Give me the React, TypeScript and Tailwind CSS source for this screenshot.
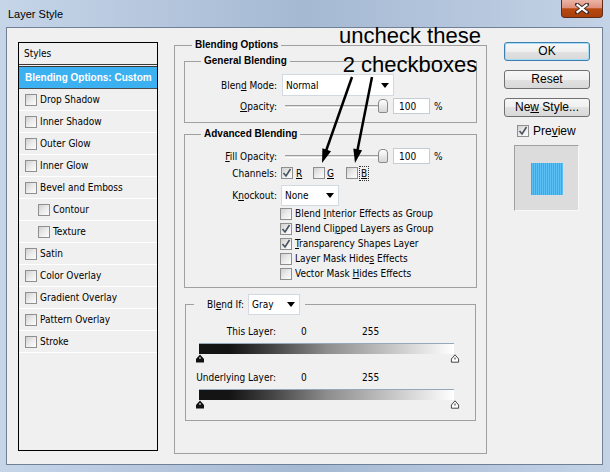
import React from 'react';

function Check({ checked = false }: { checked?: boolean }) {
  return (
    <span className="flex h-[12px] w-[12px] shrink-0 items-center justify-center border border-[#8f8f8f] bg-linear-to-br from-[#d0d0d0] via-[#ebebeb] to-[#fdfdfd]">
      {checked && (
        <svg width="10" height="10" viewBox="0 0 10 10">
          <path d="M1.5 5 L4 8 L8.5 1" fill="none" stroke="#46525f" strokeWidth="1.6" />
        </svg>
      )}
    </span>
  );
}

function Select({ value, className }: { value: string; className: string }) {
  return (
    <div className={`flex items-center justify-between border border-[#d3d9e0] bg-white pl-[3px] pr-[4px] ${className}`}>
      <span>{value}</span>
      <svg width="8" height="5" viewBox="0 0 8 5">
        <path d="M0 0H8L4 5Z" fill="#000" />
      </svg>
    </div>
  );
}

function Slider() {
  return (
    <div className="relative flex h-[16px] w-[112px] items-center">
      <div className="ml-[4px] h-[3px] w-[97px] border-t border-b border-t-[#9c9c9c] border-b-white bg-[#dedede]" />
      <div className="absolute left-[97px] top-[1px] h-[14px] w-[10px] rounded-t-[4px] rounded-b-[2px] border border-[#8a8a8a] bg-linear-to-b from-white to-[#d6d6d6]" />
    </div>
  );
}

function Num() {
  return (
    <>
      <div className="flex h-[16px] w-[37px] items-center border border-[#c6ccd4] bg-white pl-[5px]">100</div>
      <span className="ml-[4px]">%</span>
    </>
  );
}

function Label({ children }: { children: React.ReactNode }) {
  return <div className="w-[96px] shrink-0 pr-[4px] text-right">{children}</div>;
}

function Tri({ dark }: { dark?: boolean }) {
  return (
    <svg width="10" height="9" viewBox="0 0 10 9">
      {dark ? (
        <>
          <path d="M5 0.5 L9 5 L9 8.5 L1 8.5 L1 5 Z" fill="#111" />
          <rect x="4.5" y="3" width="1" height="2" fill="#fff" />
        </>
      ) : (
        <>
          <path d="M5 0.8 L8.6 5 L8.6 8.2 L1.4 8.2 L1.4 5 Z" fill="#fff" stroke="#333" strokeWidth="0.9" />
          <rect x="4.5" y="3.5" width="1" height="2" fill="#333" />
        </>
      )}
    </svg>
  );
}

function Bar() {
  return (
    <div className="ml-[13px] mt-[5px] h-[11px] w-[255px] border-t border-[#96a7ba] bg-linear-to-r from-[#141414] from-[12%] via-[#8d8d8d] via-[50%] to-white" />
  );
}

function Button({ children, focused, className = '' }: { children: React.ReactNode; focused?: boolean; className?: string }) {
  return (
    <div
      className={`flex h-[19px] w-[86px] items-center justify-center rounded-[3px] border bg-[linear-gradient(#f7f7f7,#efefef_50%,#e2e2e2_50%,#d8d8d8)] ${
        focused ? 'border-[#3c7fb1] shadow-[inset_0_0_0_1px_#a6dcf6]' : 'border-[#707070]'
      } ${className}`}
    >
      <span>{children}</span>
    </div>
  );
}

const styles: { t: React.ReactNode; indent?: boolean }[] = [
  { t: 'Drop Shadow' },
  { t: 'Inner Shadow' },
  { t: 'Outer Glow' },
  { t: 'Inner Glow' },
  { t: 'Bevel and Emboss' },
  { t: 'Contour', indent: true },
  { t: 'Texture', indent: true },
  { t: 'Satin' },
  { t: 'Color Overlay' },
  { t: 'Gradient Overlay' },
  { t: 'Pattern Overlay' },
  { t: 'Stroke' },
];

export default function App() {
  return (
    <div className="relative flex h-[472px] w-[610px] flex-col bg-linear-to-r from-[#c6d5e8] via-[#a5b9d3] to-[#c4d3e6] text-[10px] leading-[13px] text-black [font-family:'DejaVu_Sans_Condensed','Liberation_Sans',sans-serif]">
      {/* title bar */}
      <div className="flex h-[27px] shrink-0 items-start justify-between">
        <span className="ml-[8px] mt-[7px] text-[11px] leading-[14px] [font-family:'Liberation_Sans',sans-serif]">Layer Style</span>
        <div className="mr-[7px] flex h-[18px] w-[42px] items-center justify-center rounded-b-[4px] border border-t-0 border-[#5e2a1a] bg-[linear-gradient(#ecb4a6,#df917e_45%,#b8480f_52%,#a8400c)]">
          <svg width="14" height="11" viewBox="0 0 14 11">
            <path d="M2 1.5 L12 9.5 M12 1.5 L2 9.5" stroke="#3a2a2a" strokeWidth="4" strokeLinecap="square" />
            <path d="M2.5 2 L11.5 9 M11.5 2 L2.5 9" stroke="#fff" strokeWidth="2.2" strokeLinecap="square" />
          </svg>
        </div>
      </div>

      {/* client */}
      <div className="mb-[7px] ml-[6px] mr-[7px] flex flex-1 items-start border border-[#6f8097] bg-[#f0f0f0] pl-[11px] pt-[10px]">
        {/* styles list */}
        <div className="mt-[4px] flex h-[409px] w-[140px] shrink-0 flex-col border border-black bg-[#f0f0f0]">
          <div className="flex h-[22px] items-center border-b border-[#3a3a3a] pl-[5px]">Styles</div>
          <div className="mt-[1px] flex h-[23px] items-center border-t border-b border-t-[#3a3a3a] border-b-[#4a4a4a] bg-[#3bb1f2] pl-[6px] font-bold text-white [font-family:'Liberation_Sans',sans-serif]">
            Blending Options: Custom
          </div>
          {styles.map((s, i) => (
            <div
              key={i}
              className={`flex h-[22px] shrink-0 items-center gap-[3px] border-b border-white ${s.indent ? 'pl-[19px]' : 'pl-[6px]'}`}
            >
              <Check />
              <span>{s.t}</span>
            </div>
          ))}
        </div>

        {/* blending options */}
        <fieldset className="ml-[16px] h-[416px] w-[313px] shrink-0 border border-[#a0a0a0]">
          <legend className="ml-[17px] px-[3px] font-bold leading-[14px] [font-family:'Liberation_Sans',sans-serif]">Blending Options</legend>

          <fieldset className="mx-[9px] mt-[2px] h-[69px] border border-[#a0a0a0]">
            <legend className="ml-[16px] px-[3px] font-bold leading-[14px] [font-family:'Liberation_Sans',sans-serif]">General Blending</legend>
            <div className="mt-[6px] flex h-[22px] items-center">
              <Label>
                Blen<u>d</u> Mode:
              </Label>
              <Select value="Normal" className="ml-[1px] h-[22px] w-[112px]" />
            </div>
            <div className="mt-[2px] flex h-[16px] items-center">
              <Label>
                <u>O</u>pacity:
              </Label>
              <Slider />
              <Num />
            </div>
          </fieldset>

          <fieldset className="mx-[9px] mt-[4px] h-[161px] border border-[#a0a0a0]">
            <legend className="ml-[16px] px-[3px] font-bold leading-[14px] [font-family:'Liberation_Sans',sans-serif]">Advanced Blending</legend>
            <div className="mt-[7px] flex h-[16px] items-center">
              <Label>
                <u>F</u>ill Opacity:
              </Label>
              <Slider />
              <Num />
            </div>
            <div className="flex h-[18px] items-center">
              <Label>Channels:</Label>
              <div className="flex w-[32px] items-center gap-[3px]">
                <Check checked />
                <u>R</u>
              </div>
              <div className="flex w-[33px] items-center gap-[2px]">
                <Check />
                <u>G</u>
              </div>
              <div className="flex items-center gap-[1px]">
                <Check />
                <span className="border border-dotted border-[#333] px-[1px] leading-[13px]">
                  <u>B</u>
                </span>
              </div>
            </div>
            <div className="mt-[3px] flex h-[21px] items-center">
              <Label>
                K<u>n</u>ockout:
              </Label>
              <Select value="None" className="h-[21px] w-[58px]" />
            </div>
            {[
              [<>Blend <u>I</u>nterior Effects as Group</>, false],
              [<>Blend Cli<u>p</u>ped Layers as Group</>, true],
              [<><u>T</u>ransparency Shapes Layer</>, true],
              [<>Layer Mask Hide<u>s</u> Effects</>, false],
              [<>Vector Mask <u>H</u>ides Effects</>, false],
            ].map(([t, c], i) => (
              <div key={i} className="flex h-[15px] items-center gap-[3px] pl-[95px]">
                <Check checked={c as boolean} />
                <span>{t as React.ReactNode}</span>
              </div>
            ))}
          </fieldset>

          <fieldset className="mx-[10px] mt-[6px] h-[127px] border border-[#a0a0a0]">
            <legend className="ml-[8px] pl-[13px] pr-[5px]">
              <div className="flex items-center">
                <span>
                  Bl<u>e</u>nd If:
                </span>
                <Select value="Gray" className="ml-[4px] h-[21px] w-[52px]" />
              </div>
            </legend>
            <div className="mt-[9px] flex h-[14px] items-center">
              <div className="w-[90px] text-right">This Layer:</div>
              <div className="w-[86px] pl-[25px]">0</div>
              <div>255</div>
            </div>
            <Bar />
            <div className="ml-[9px] flex h-[9px] w-[265px] justify-between">
              <Tri dark />
              <Tri />
            </div>
            <div className="mt-[7px] flex h-[14px] items-center">
              <div className="w-[90px] text-right">Underlying Layer:</div>
              <div className="w-[86px] pl-[25px]">0</div>
              <div>255</div>
            </div>
            <Bar />
            <div className="ml-[9px] flex h-[9px] w-[265px] justify-between">
              <Tri dark />
              <Tri />
            </div>
          </fieldset>
        </fieldset>

        {/* right column */}
        <div className="ml-[17px] mt-[4px] flex w-[86px] shrink-0 flex-col text-[12px] leading-[15px] [font-family:'Liberation_Sans',sans-serif]">
          <Button focused>OK</Button>
          <Button className="mt-[9px]">Reset</Button>
          <Button className="mt-[9px]">
            Ne<u>w</u> Style...
          </Button>
          <div className="mt-[7px] flex h-[14px] items-center gap-[4px] pl-[13px]">
            <Check checked />
            <span>
              Pre<u>v</u>iew
            </span>
          </div>
          <div className="ml-[10px] mt-[7px] flex h-[66px] w-[65px] items-center justify-center border border-t-[#a0a0a0] border-l-[#a0a0a0] border-r-[#f8f8f8] border-b-[#f8f8f8] bg-[#dcdcdc]">
            <div className="ml-[1px] mt-[2px] h-[32px] w-[32px] bg-[repeating-linear-gradient(90deg,#34acf0_0px,#34acf0_1px,#5ac0f6_1px,#5ac0f6_2px)]" />
          </div>
        </div>
      </div>

      {/* annotation overlay */}
      <div className="pointer-events-none absolute inset-0">
        <div className="absolute left-[310px] top-[21px] w-[200px] text-center text-[22px] leading-[29px] text-black [font-family:'Liberation_Sans',sans-serif]">
          uncheck these
          <br />2 checkboxes
        </div>
        <svg className="absolute left-0 top-0" width="610" height="472" viewBox="0 0 610 472">
          <line x1="352" y1="77" x2="326" y2="151" stroke="#000" strokeWidth="2.5" />
          <polygon points="322,163 331,151.3 322.4,148.3" fill="#000" />
          <line x1="372" y1="77" x2="357.5" y2="150" stroke="#000" strokeWidth="2.5" />
          <polygon points="355,163 362.1,150.2 353.3,148.4" fill="#000" />
        </svg>
      </div>
    </div>
  );
}
